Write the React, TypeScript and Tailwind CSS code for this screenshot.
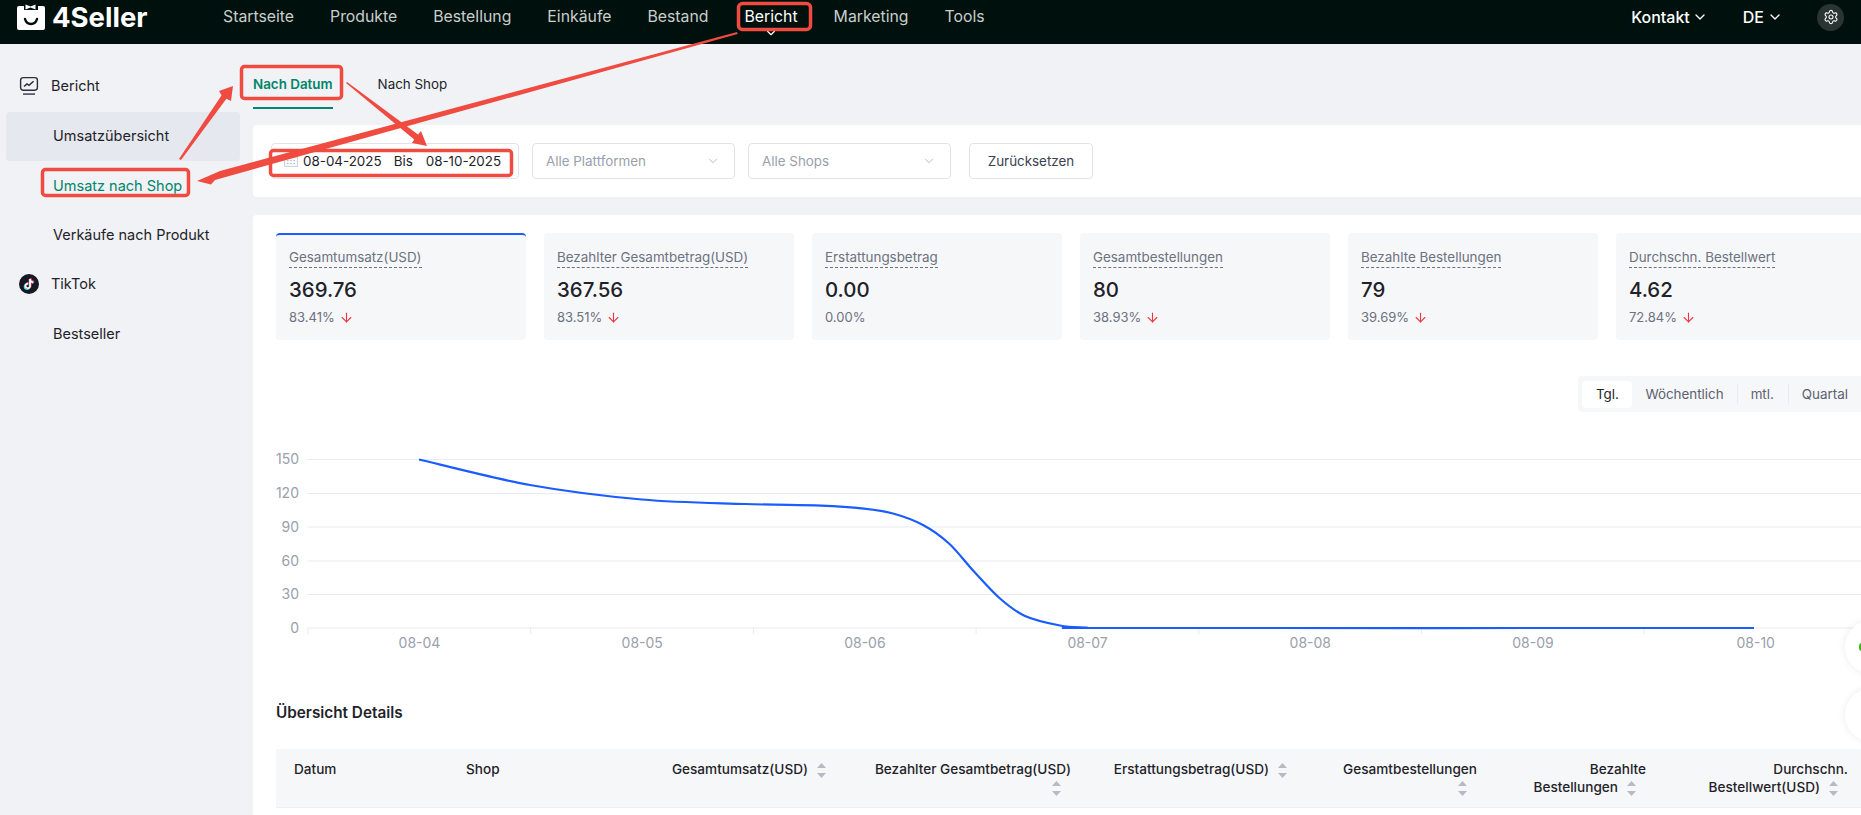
import { ArrowDown, ChevronDown, Settings } from "lucide-react";
import { SiTiktok } from "react-icons/si";

const navItems = ["Startseite", "Produkte", "Bestellung", "Einkäufe", "Bestand", "Bericht", "Marketing", "Tools"];

const stats = [
  { label: "Gesamtumsatz(USD)", value: "369.76", pct: "83.41%", down: true },
  { label: "Bezahlter Gesamtbetrag(USD)", value: "367.56", pct: "83.51%", down: true },
  { label: "Erstattungsbetrag", value: "0.00", pct: "0.00%", down: false },
  { label: "Gesamtbestellungen", value: "80", pct: "38.93%", down: true },
  { label: "Bezahlte Bestellungen", value: "79", pct: "39.69%", down: true },
  { label: "Durchschn. Bestellwert", value: "4.62", pct: "72.84%", down: true },
];

const yAxis = [
  { label: "150", y: 459.5 },
  { label: "120", y: 493.5 },
  { label: "90", y: 527 },
  { label: "60", y: 561 },
  { label: "30", y: 594.5 },
  { label: "0", y: 628 },
];

const xLabels = ["08-04", "08-05", "08-06", "08-07", "08-08", "08-09", "08-10"];

// points read off the curve, page coordinates
const linePoints: [number, number][] = [
  [419, 459.5], [530, 485], [642, 499.5], [745, 504], [821, 505.7], [864, 508.7], [893, 513.5],
  [923, 525], [949, 543.5], [974, 571.5], [1000, 598.5], [1025, 616], [1060, 625.5], [1086, 627.5],
  [1120, 628], [1754, 628],
];

function smoothPath(pts: [number, number][]) {
  let d = `M${pts[0][0]} ${pts[0][1]}`;
  for (let i = 0; i < pts.length - 1; i++) {
    const p0 = pts[Math.max(i - 1, 0)];
    const p1 = pts[i];
    const p2 = pts[i + 1];
    const p3 = pts[Math.min(i + 2, pts.length - 1)];
    const c1x = p1[0] + (p2[0] - p0[0]) / 6;
    const c1y = p1[1] + (p2[1] - p0[1]) / 6;
    const c2x = p2[0] - (p3[0] - p1[0]) / 6;
    const c2y = p2[1] - (p3[1] - p1[1]) / 6;
    d += ` C${c1x} ${c1y} ${c2x} ${c2y} ${p2[0]} ${p2[1]}`;
  }
  return d;
}

function Logo() {
  return (
    <svg width="30" height="28" viewBox="0 0 30 28" className="mt-[3px] shrink-0 self-start">
      <path d="M3 3h24a2 2 0 0 1 2 2v20a2 2 0 0 1-2 2H3a2 2 0 0 1-2-2V5a2 2 0 0 1 2-2z" fill="#fff" />
      <path d="M8 1h14v6H8z" fill="#00100d" />
      <path d="M9.5 1.5l5 2 5-2v5l-5-2-5 2z" fill="#fff" />
      <path d="M9 16c1 3.6 3.4 5 6 5s5-1.4 6-5" fill="none" stroke="#00100d" strokeWidth="2.4" strokeLinecap="round" />
    </svg>
  );
}

function ReportIcon() {
  return (
    <svg width="20" height="20" viewBox="0 0 20 20" className="shrink-0">
      <rect x="1.6" y="1.6" width="16.8" height="12.6" rx="2.6" fill="none" stroke="#2b2f3a" strokeWidth="1.4" />
      <path d="M5 10.5l3-2.6 2 1.4 4.6-4" fill="none" stroke="#2b2f3a" strokeWidth="1.5" />
      <rect x="4" y="17.2" width="12" height="1.8" fill="#5d6068" />
    </svg>
  );
}

function TikTokIcon() {
  return (
    <span className="relative flex h-5 w-5 shrink-0 items-center justify-center rounded-full bg-[#161823]">
      <SiTiktok size={11} className="absolute left-[4px] top-[5px] text-[#25f4ee]" />
      <SiTiktok size={11} className="absolute left-[5px] top-[4px] text-[#fe2c55]" />
      <SiTiktok size={10} className="relative text-white" />
    </span>
  );
}

function CalendarIcon() {
  return (
    <svg width="14" height="12" viewBox="0 0 14 12" className="shrink-0">
      <rect x="0.5" y="0.5" width="13" height="11" fill="#f7f8fa" stroke="#cfd2d9" />
      <rect x="0.5" y="0.5" width="13" height="2.5" fill="#dfe1e6" />
      <path d="M3 5.5h1.5M6.2 5.5h1.5M9.5 5.5h1.5M3 8.5h1.5M6.2 8.5h1.5M9.5 8.5h1.5" stroke="#b3b7c0" strokeWidth="1" />
    </svg>
  );
}

function SortIcon() {
  return (
    <svg width="9" height="15" viewBox="0 0 9 15" className="ml-[9px] mr-[10px] inline-block align-middle">
      <path d="M4.5 0L9 5H0z" fill="#b6bac4" />
      <path d="M4.5 15L0 10h9z" fill="#b6bac4" />
    </svg>
  );
}

function StatCard({ stat, active }: { stat: (typeof stats)[number]; active: boolean }) {
  return (
    <div
      className={`h-[107px] w-[250px] shrink-0 rounded border-t-2 bg-[#f6f7f9] px-[13px] pt-3 ${
        active ? "border-[#1b5cff]" : "border-transparent"
      }`}
    >
      <div className="flex">
        <span className="border-b border-dashed border-[#6b7280] text-[13.4px] leading-5 text-[#6b7280]">{stat.label}</span>
      </div>
      <div className="mt-2 text-[20.4px] font-medium leading-7 text-[#1f2329]">{stat.value}</div>
      <div className="mt-[3px] flex items-center gap-1 text-[13px] leading-5 text-[#6b7280]">
        {stat.pct}
        {stat.down && <ArrowDown size={15} strokeWidth={1.7} className="text-[#f5333f]" />}
      </div>
    </div>
  );
}

function Chart() {
  return (
    <svg width="1590" height="291" viewBox="276 412 1590 291" className="block">
      {yAxis.map((t) => (
        <g key={t.label}>
          <line x1="307.5" x2="1866" y1={t.y} y2={t.y} stroke="#e8ebf3" strokeWidth="1" />
          <text x="299" y={t.y + 4.5} textAnchor="end" fontSize="14" fill="#9aa0ac">
            {t.label}
          </text>
        </g>
      ))}
      {xLabels.map((l, i) => (
        <g key={l}>
          <line x1={308 + i * 222.7} x2={308 + i * 222.7} y1="628" y2="634" stroke="#e8ebf3" strokeWidth="1" />
          <text x={419.5 + i * 222.7} y="648" textAnchor="middle" fontSize="14" fill="#9aa0ac">
            {l}
          </text>
        </g>
      ))}
      <path d={smoothPath(linePoints)} fill="none" stroke="#1b5cff" strokeWidth="2.2" />
    </svg>
  );
}

function Annotations() {
  return (
    <svg width="1861" height="815" viewBox="0 0 1861 815" className="pointer-events-none absolute left-0 top-0">
      <g fill="none" stroke="#ef4b40" strokeWidth="3.5">
        <rect x="738.5" y="3.5" width="72" height="26" rx="4" />
        <rect x="241.5" y="66.5" width="100" height="32" rx="3" />
        <rect x="270.5" y="150.5" width="241" height="25" rx="3" />
        <rect x="42.5" y="169.5" width="146" height="26" rx="3" />
      </g>
      <g fill="#ef4b40">
        <polygon points="737,32 737.6,34 215,180 211,184.5 197,181 220,171" />
        <polygon points="179,159 181,160 226.4,98.8 231,101 233,86 219,91 221.6,95.2" />
        <polygon points="346,83 347,82 418,134.6 421,131 427,146 412,143 414.2,139.4" />
      </g>
    </svg>
  );
}

export default function App() {
  return (
    <div className="relative h-[815px] w-[1861px] overflow-hidden bg-[#f0f2f6] font-[Inter,sans-serif] text-[#1f2329]">
      <header className="flex h-11 items-center bg-[#00100d] pl-4 pr-[17px]">
        <Logo />
        <span className="ml-[6px] w-[97px] pb-[9px] text-[27.5px] font-bold leading-none text-white">4Seller</span>
        <nav className="ml-[74px] flex items-center gap-9 pb-[11px] text-[15.8px]">
          {navItems.map((item) => (
            <span key={item} className={`relative ${item === "Bericht" ? "text-white" : "text-[#c8cecb]"}`}>
              {item}
              {item === "Bericht" && (
                <ChevronDown size={14} className="absolute left-1/2 top-[21px] -ml-[7px] text-white" />
              )}
            </span>
          ))}
        </nav>
        <div className="ml-auto flex items-center pb-[10px] text-base font-medium text-white">
          <span>Kontakt</span>
          <ChevronDown size={16} className="ml-[2px]" />
          <span className="ml-[35px]">DE</span>
          <ChevronDown size={16} className="ml-[3px]" />
          <span className="ml-[34px] flex h-[27px] w-[27px] items-center justify-center rounded-full bg-[#2a3533]">
            <Settings size={16} strokeWidth={1.6} />
          </span>
        </div>
      </header>

      <div className="flex">
        <aside className="w-[253px] shrink-0 pl-[6px] pr-[13px] pt-[19px] text-[14.5px]">
          <div className="mb-1 flex h-[45px] items-center gap-3 pl-[13px]">
            <ReportIcon />
            <span>Bericht</span>
          </div>
          <div className="flex h-[49px] items-center rounded bg-[#e6e8ef] pb-[2px] pl-[47px]">Umsatzübersicht</div>
          <div className="flex h-[49px] items-center pl-[47px] text-[#00856a]">Umsatz nach Shop</div>
          <div className="flex h-[49px] items-center pl-[47px]">Verkäufe nach Produkt</div>
          <div className="flex h-[49px] items-center gap-3 pl-[13px]">
            <TikTokIcon />
            <span>TikTok</span>
          </div>
          <div className="flex h-[49px] items-center pl-[47px] pt-[2px]">Bestseller</div>
        </aside>

        <main className="w-[1620px] shrink-0">
          <div className="flex h-[81px] items-start gap-[45px] text-[13.4px] leading-5">
            <div className="border-b-2 border-[#00856a] pb-[13px] pt-[30px] font-semibold text-[#00856a]">Nach Datum</div>
            <div className="pt-[30px]">Nach Shop</div>
          </div>

          <div className="mb-[18px] flex h-[72px] items-center gap-[13px] rounded-l bg-white pl-[18px] text-[13.4px]">
            <div className="flex h-9 w-[248px] items-center rounded border border-[#e0e3ea] pl-3">
              <CalendarIcon />
              <span className="ml-[5px]">08-04-2025</span>
              <span className="ml-3">Bis</span>
              <span className="ml-[13px]">08-10-2025</span>
            </div>
            <div className="flex h-9 w-[203px] items-center justify-between rounded border border-[#e0e3ea] pl-[13px] pr-[14px] text-[#9aa0ac]">
              Alle Plattformen
              <ChevronDown size={14} strokeWidth={1.2} />
            </div>
            <div className="flex h-9 w-[203px] items-center justify-between rounded border border-[#e0e3ea] pl-[13px] pr-[14px] text-[#9aa0ac]">
              Alle Shops
              <ChevronDown size={14} strokeWidth={1.2} />
            </div>
            <div className="ml-[5px] flex h-9 w-[124px] items-center justify-center rounded border border-[#e0e3ea] text-[#3c4150]">
              Zurücksetzen
            </div>
          </div>

          <section className="h-[600px] rounded-tl bg-white pl-[23px] pt-[18px]">
            <div className="flex gap-[18px]">
              {stats.map((s, i) => (
                <StatCard key={s.label} stat={s} active={i === 0} />
              ))}
            </div>

            <div className="mt-9 flex w-[1590px] justify-end">
              <div className="flex h-9 items-center rounded bg-[#f6f7f9] p-1 text-[13.4px] text-[#5b6170]">
                <span className="flex h-[27px] w-[50px] items-center justify-center rounded bg-white text-[#1f2329]">Tgl.</span>
                <span className="border-r border-[#e8ebf3] px-[13px]">Wöchentlich</span>
                <span className="border-r border-[#e8ebf3] pl-[13px] pr-[14px]">mtl.</span>
                <span className="pl-[13px] pr-[14px]">Quartal</span>
              </div>
            </div>

            <Chart />

            <h3 className="mb-[26px] text-[15.3px] font-semibold leading-5">Übersicht Details</h3>

            <div className="grid h-[59px] w-[1590px] grid-cols-[172px_206px_200px_235px_226px_180px_169px_202px] border-b border-[#eceef2] bg-[#f6f7f9] pt-[11px] text-[13.6px] font-medium leading-[18px]">
              <div className="pl-[18px]">Datum</div>
              <div className="pl-[18px]">Shop</div>
              <div className="pr-[18px] text-right">Gesamtumsatz(USD)<SortIcon /></div>
              <div className="pl-3 pr-[18px] text-right">Bezahlter Gesamtbetrag(USD)<SortIcon /></div>
              <div className="pl-[18px] pr-[18px] text-right">Erstattungsbetrag(USD)<SortIcon /></div>
              <div className="pl-[18px] pr-[18px] text-right">Gesamtbestellungen<SortIcon /></div>
              <div className="pl-[18px] pr-[18px] text-right">Bezahlte Bestellungen<SortIcon /></div>
              <div className="pl-[18px] pr-[18px] text-right">Durchschn. Bestellwert(USD)<SortIcon /></div>
            </div>
          </section>
        </main>
      </div>

      <div className="absolute left-[1845px] top-[620px] h-[54px] w-[54px] rounded-full bg-white shadow-[0_0_8px_rgba(0,0,0,0.08)]">
        <span className="absolute left-[14px] top-[23px] h-2 w-[6px] rounded-full bg-[#3fb618]" />
      </div>
      <div className="absolute left-[1845px] top-[688px] h-[54px] w-[54px] rounded-full bg-white shadow-[0_0_8px_rgba(0,0,0,0.08)]" />

      <Annotations />
    </div>
  );
}
